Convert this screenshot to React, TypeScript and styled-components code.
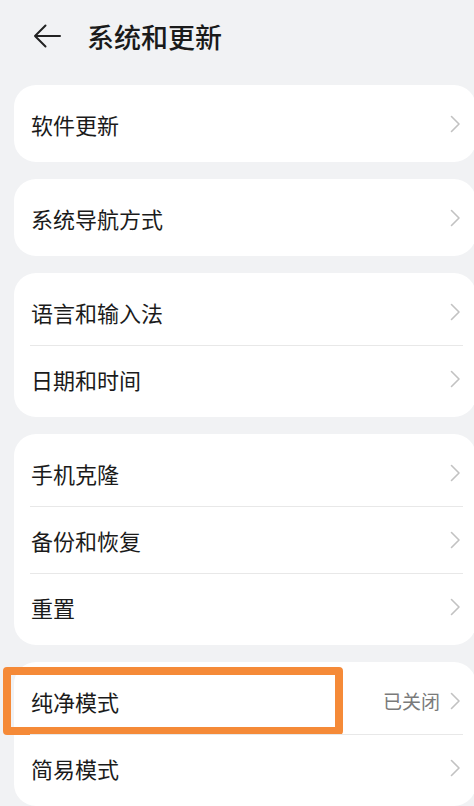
import React from "react";
import styled, { createGlobalStyle } from "styled-components";

type Item = {
  label: string;
  value?: string;
  highlight?: boolean;
};

const groups: Item[][] = [
  [{ label: "软件更新" }],
  [{ label: "系统导航方式" }],
  [{ label: "语言和输入法" }, { label: "日期和时间" }],
  [{ label: "手机克隆" }, { label: "备份和恢复" }, { label: "重置" }],
  [{ label: "纯净模式", value: "已关闭", highlight: true }, { label: "简易模式" }],
];

const BackArrow = () => (
  <svg width="28" height="24" viewBox="0 0 28 24" fill="none">
    <path
      d="M27 12H2M12.5 1.5L2 12l10.5 10.5"
      stroke="#222"
      strokeWidth="2"
      strokeLinecap="round"
      strokeLinejoin="round"
    />
  </svg>
);

const Chevron = () => (
  <svg width="11" height="18" viewBox="0 0 11 18" fill="none">
    <path
      d="M1.5 1.5L9 9l-7.5 7.5"
      stroke="#c2c2c2"
      strokeWidth="1.6"
      strokeLinecap="round"
      strokeLinejoin="round"
    />
  </svg>
);

function App() {
  return (
    <>
      <GlobalStyle />
      <Page>
        <Header>
          <BackButton>
            <BackArrow />
          </BackButton>
          <Title>系统和更新</Title>
        </Header>
        <List>
          {groups.map((group, gi) => (
            <Card key={gi}>
              {group.map((item) => (
                <Row key={item.label}>
                  <Label>{item.label}</Label>
                  {item.value && <Value>{item.value}</Value>}
                  <Chevron />
                  {item.highlight && <Highlight />}
                </Row>
              ))}
            </Card>
          ))}
        </List>
      </Page>
    </>
  );
}

const GlobalStyle = createGlobalStyle`
  html, body {
    margin: 0;
    padding: 0;
    background: #f1f2f4;
    overflow: hidden;
  }
  body {
    font-family: "Noto Sans CJK SC", "Noto Sans", sans-serif;
    color: #1b1b1b;
  }
`;

const Page = styled.main`
  width: 474px;
  height: 806px;
  overflow: hidden;
`;

const Header = styled.header`
  display: flex;
  align-items: center;
  height: 72px;
  padding-left: 33px;
  gap: 26px;
`;

const BackButton = styled.button`
  display: flex;
  align-items: center;
  padding: 0;
  border: none;
  background: none;
  cursor: pointer;
`;

const Title = styled.h1`
  margin: 0;
  font-size: 27px;
  font-weight: 500;
  line-height: 1;
  color: #1a1a1a;
`;

const List = styled.div`
  display: flex;
  flex-direction: column;
  gap: 17px;
  padding: 13px 0 0 14px;
`;

const Card = styled.section`
  width: 462px;
  background: #fff;
  border-radius: 22px;
  padding: 5px 0;
`;

const Row = styled.div`
  position: relative;
  display: flex;
  align-items: center;
  height: 67px;
  margin: 0 13px 0 16px;
  padding: 0 2px 0 1px;
  box-sizing: border-box;

  & + & {
    border-top: 1px solid #e8e8e8;
  }
`;

const Label = styled.span`
  flex: 1;
  font-size: 22px;
  line-height: 1;
`;

const Value = styled.span`
  font-size: 19px;
  color: #7a7a7a;
  margin-right: 10px;
`;

const Highlight = styled.div`
  position: absolute;
  top: 0;
  left: -27px;
  width: 340px;
  height: 68px;
  border: 8px solid #f58a38;
  border-radius: 4px;
  box-sizing: border-box;
  pointer-events: none;
`;

export default App;
